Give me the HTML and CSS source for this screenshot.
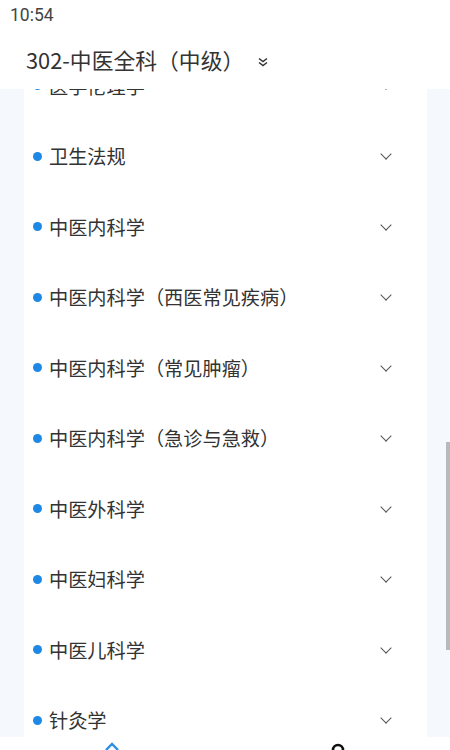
FILE: index.html
```html
<!DOCTYPE html>
<html lang="zh-CN">
<head>
    <meta charset="UTF-8">
    <title>302-中医全科（中级）</title>
    <link rel="stylesheet" href="styles.css">
</head>
<body>
<div class="status">10:54</div>
<div class="header">
    <span class="title">302-中医全科（中级）</span>
    <svg class="dbl" width="12" height="12" viewBox="0 0 12 12">
        <path d="M2 2.5l4 3 4-3M2 6.5l4 3 4-3" fill="none" stroke="#333" stroke-width="1.5"/>
    </svg>
</div>
<div class="main">
    <div class="scroll">
        <ul class="card">
            <li><i class="dot"></i><span>医学伦理学</span><b class="arr"></b></li>
            <li><i class="dot"></i><span>卫生法规</span><b class="arr"></b></li>
            <li><i class="dot"></i><span>中医内科学</span><b class="arr"></b></li>
            <li><i class="dot"></i><span>中医内科学（西医常见疾病）</span><b class="arr"></b></li>
            <li><i class="dot"></i><span>中医内科学（常见肿瘤）</span><b class="arr"></b></li>
            <li><i class="dot"></i><span>中医内科学（急诊与急救）</span><b class="arr"></b></li>
            <li><i class="dot"></i><span>中医外科学</span><b class="arr"></b></li>
            <li><i class="dot"></i><span>中医妇科学</span><b class="arr"></b></li>
            <li><i class="dot"></i><span>中医儿科学</span><b class="arr"></b></li>
            <li><i class="dot"></i><span>针灸学</span><b class="arr"></b></li>
        </ul>
    </div>
    <div class="bar"></div>
</div>
<div class="tabbar">
    <svg class="home" width="16" height="8" viewBox="0 0 16 8">
        <path d="M2 8L8 2l6 6" fill="none" stroke="#2d8ee6" stroke-width="2.4"/>
    </svg>
    <svg class="user" width="14" height="8" viewBox="0 0 14 8">
        <circle cx="7" cy="8" r="5" fill="none" stroke="#111" stroke-width="2.6"/>
    </svg>
</div>
</body>
</html>
```

FILE: styles.css
```css
*{
    margin: 0;
    padding: 0;
}
body{
    width: 450px;
    height: 750px;
    overflow: hidden;
    background: #fff;
    font-family: "Noto Sans CJK SC", "Noto Sans", sans-serif;
    color: #333;
}
li{
    list-style: none;
}
.status{
    height: 30px;
    padding-left: 10px;
    font-size: 17.5px;
    line-height: 30px;
    color: #444;
    font-family: Roboto, "Noto Sans", sans-serif;
}
.header{
    height: 59px;
    display: flex;
    align-items: center;
    padding-left: 26px;
    background: #fff;
    position: relative;
    z-index: 2;
}
.header .title{
    font-size: 21.8px;
    color: #333;
    line-height: 30px;
}
.header .dbl{
    margin-left: 13px;
    margin-top: 4px;
}
.main{
    height: 648px;
    background: #f5f8fd;
    position: relative;
    overflow: hidden;
}
.scroll{
    padding: 0 23px 0 24px;
    margin-top: -38.5px;
}
.card{
    background: #fff;
}
.card li{
    height: 70.5px;
    display: flex;
    align-items: center;
    padding-left: 9px;
    font-size: 19.2px;
}
.card .dot{
    width: 9px;
    height: 9px;
    border-radius: 50%;
    background: #1e88e5;
    margin-right: 7px;
}
.card span{
    flex: 1;
    line-height: 26px;
}
.card .arr{
    width: 7px;
    height: 7px;
    border-right: 1.4px solid #555;
    border-bottom: 1.4px solid #555;
    transform: rotate(45deg);
    margin: -4px 37px 0 0;
}
.bar{
    position: absolute;
    right: 0;
    top: 353px;
    width: 4px;
    height: 208px;
    background: #b9b9bb;
}
.tabbar{
    height: 13px;
    background: #fff;
    position: relative;
}
.tabbar .home{
    position: absolute;
    left: 104px;
    top: 5px;
}
.tabbar .user{
    position: absolute;
    left: 331px;
    top: 5px;
}
```
